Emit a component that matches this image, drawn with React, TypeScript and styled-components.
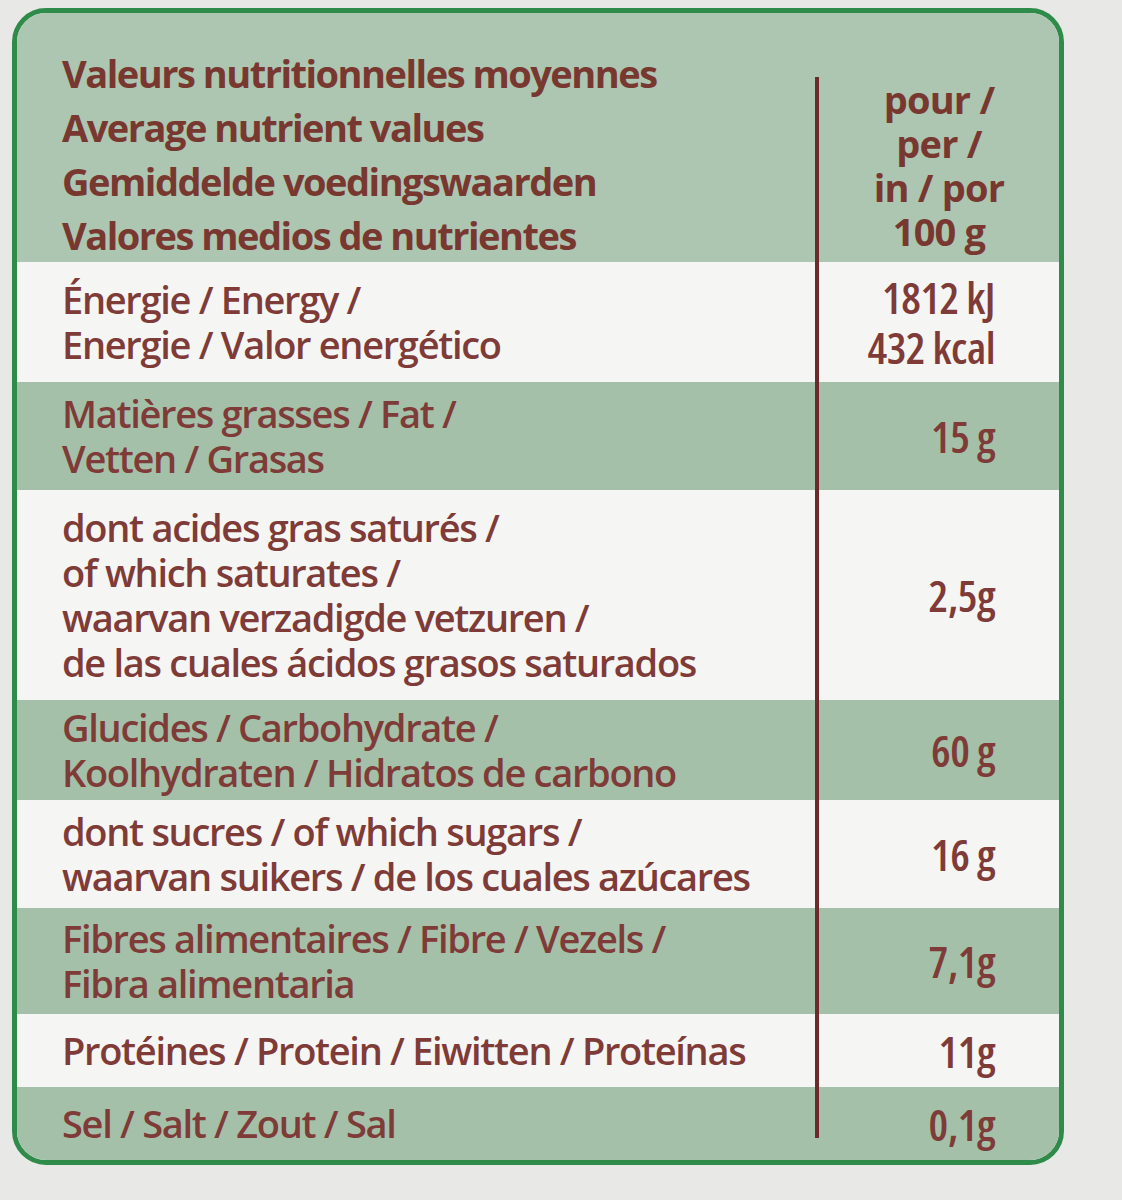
import * as React from 'react'
import styled, { createGlobalStyle } from 'styled-components'

const GlobalStyle = createGlobalStyle`
  html, body {
    margin: 0;
    padding: 0;
    background: #e8e8e6;
  }
`

type Tone = 'head' | 'green' | 'white'

interface NutrientRow {
  label: string[]
  value: string[]
  tone: Tone
  pad: number
}

const rows: NutrientRow[] = [
  {
    label: ['Énergie / Energy /', 'Energie / Valor energético'],
    value: ['1812 kJ', '432 kcal'],
    tone: 'white',
    pad: 15
  },
  {
    label: ['Matières grasses / Fat /', 'Vetten / Grasas'],
    value: ['15 g'],
    tone: 'green',
    pad: 9
  },
  {
    label: [
      'dont acides gras saturés /',
      'of which saturates /',
      'waarvan verzadigde vetzuren /',
      'de las cuales ácidos grasos saturados'
    ],
    value: ['2,5g'],
    tone: 'white',
    pad: 15
  },
  {
    label: ['Glucides / Carbohydrate /', 'Koolhydraten / Hidratos de carbono'],
    value: ['60 g'],
    tone: 'green',
    pad: 5
  },
  {
    label: ['dont sucres / of which sugars /', 'waarvan suikers / de los cuales azúcares'],
    value: ['16 g'],
    tone: 'white',
    pad: 9
  },
  {
    label: ['Fibres alimentaires / Fibre / Vezels /', 'Fibra alimentaria'],
    value: ['7,1g'],
    tone: 'green',
    pad: 8
  },
  {
    label: ['Protéines / Protein / Eiwitten / Proteínas'],
    value: ['11g'],
    tone: 'white',
    pad: 14
  },
  {
    label: ['Sel / Salt / Zout / Sal'],
    value: ['0,1g'],
    tone: 'green',
    pad: 14
  }
]

const fills: Record<Tone, string> = {
  head: '#adc6b1',
  green: '#a5c0a9',
  white: '#f5f5f3'
}

export default function App() {
  return (
    <>
      <GlobalStyle />
      <Page>
        <Card>
          <Row $tone="head">
            <HeadLabel>
              <div>Valeurs nutritionnelles moyennes</div>
              <div>Average nutrient values</div>
              <div>Gemiddelde voedingswaarden</div>
              <div>Valores medios de nutrientes</div>
            </HeadLabel>
            <ValueCell $align="center" $top={64} $bottom={0}>
              <HeadValue>
                <div>pour /</div>
                <div>per /</div>
                <div>in / por</div>
                <div>100 g</div>
              </HeadValue>
            </ValueCell>
          </Row>
          {rows.map((row, i) => (
            <Row key={i} $tone={row.tone}>
              <Label $pad={row.pad}>
                {row.label.map((line) => (
                  <div key={line}>{line}</div>
                ))}
              </Label>
              <ValueCell
                $align="flex-end"
                $top={0}
                $bottom={i === rows.length - 1 ? 22 : 0}
              >
                {row.value.map((v) => (
                  <Value key={v}>{v}</Value>
                ))}
              </ValueCell>
            </Row>
          ))}
        </Card>
      </Page>
    </>
  )
}

const Page = styled.div`
  padding: 8px 58px 30px 12px;
  font-family: 'Open Sans', 'DejaVu Sans', sans-serif;
  color: #7e3b37;
`

const Card = styled.div`
  width: 1052px;
  box-sizing: border-box;
  border: 5px solid #2f8b49;
  border-radius: 34px;
  overflow: hidden;
  background: #f5f5f3;
`

const Row = styled.div<{ $tone: Tone }>`
  display: grid;
  grid-template-columns: 798px 1fr;
  background: ${({ $tone }) => fills[$tone]};
`

const Label = styled.div<{ $pad: number }>`
  padding: ${({ $pad }) => $pad}px 0 ${({ $pad }) => $pad}px 45px;
  font-size: 38px;
  line-height: 45px;
  font-weight: 600;
  font-stretch: 89%;
  white-space: nowrap;
  letter-spacing: -1.3px;
`

const HeadLabel = styled.div`
  padding: 33px 0 0 45px;
  font-size: 38px;
  line-height: 54px;
  font-weight: 700;
  font-stretch: 89%;
  white-space: nowrap;
  letter-spacing: -1.5px;
  color: #783830;
`

const ValueCell = styled.div<{ $align: string; $top: number; $bottom: number }>`
  position: relative;
  display: flex;
  flex-direction: column;
  justify-content: center;
  align-items: ${({ $align }) => $align};
  padding-right: ${({ $align }) => ($align === 'center' ? 0 : 64)}px;
  padding-left: 4px;
  &::before {
    content: '';
    position: absolute;
    left: 0;
    width: 4px;
    top: ${({ $top }) => $top}px;
    bottom: ${({ $bottom }) => $bottom}px;
    background: #6b2a2b;
  }
`

const HeadValue = styled.div`
  align-self: stretch;
  padding-top: 54px;
  font-size: 38px;
  line-height: 44px;
  font-weight: 700;
  font-stretch: 89%;
  letter-spacing: -0.8px;
  text-align: center;
  color: #783830;
`

const Value = styled.div`
  font-size: 44px;
  line-height: 50px;
  font-weight: 600;
  font-stretch: 75%;
  white-space: nowrap;
  letter-spacing: -0.5px;
`
